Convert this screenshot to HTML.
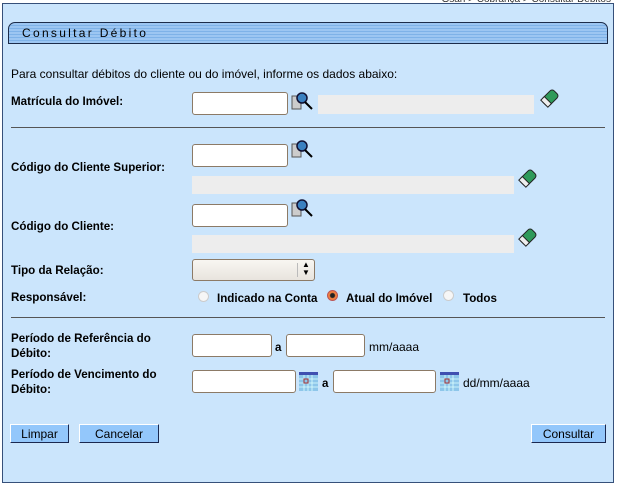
<!DOCTYPE html>
<html><head><meta charset="utf-8"><style>
body{margin:0;width:617px;height:486px;background:#fff;font-family:"Liberation Sans",sans-serif;font-size:12px;color:#000;position:relative;overflow:hidden}
.a{position:absolute}
#panel{left:2px;top:3px;width:610px;height:478px;border:1px solid #36507a;background:#cbe5fc}
#hdr{left:8px;top:22px;width:598px;height:20px;border:1px solid #1c2c4a;border-radius:7px 7px 0 0;background:repeating-linear-gradient(#9cc6f2 0 2px,#7eb2e8 2px 3px)}
#hdr span{position:absolute;left:13px;top:3px;letter-spacing:2.3px;font-size:12px}
.in{position:absolute;background:#fff;border:1px solid #8c7a66;border-radius:3px;box-sizing:border-box}
.gr{position:absolute;background:#ededed}
.b{font-weight:bold;font-size:11.6px}
hr{position:absolute;margin:0;border:0;border-top:1px solid #555;height:0}
.btn{position:absolute;background:#93c7fb;border:1px solid;border-color:#fff #1a2850 #1a2850 #fff;font-size:12px;text-align:center;line-height:18px;height:19px;box-sizing:border-box}
.rad{position:absolute;width:11px;height:11px;border-radius:50%;border:1px solid #ccc;background:#f6f6f6;box-sizing:border-box}
</style></head><body>
<div class="a" style="right:6px;top:-6px;font-size:10px;color:#333">Gsan &gt; Cobrança &gt; Consultar Débitos</div>
<div class="a" id="panel"></div>
<div class="a" id="hdr"><span>Consultar Débito</span></div>
<div class="a" style="left:11px;top:67px">Para consultar débitos do cliente ou do imóvel, informe os dados abaixo:</div>
<div class="a b" style="left:11px;top:95px">Matrícula do Imóvel:</div>
<div class="in" style="left:192px;top:92px;width:96px;height:23px"></div>
<svg class="a" style="left:291px;top:91px" width="24" height="22"><rect x="1" y="5" width="9" height="13" fill="#ccc" stroke="#555"/><circle cx="11" cy="7" r="5" fill="#3a80c0" stroke="#113" stroke-width="1.5"/><line x1="14" y1="11" x2="21" y2="18" stroke="#000" stroke-width="2"/></svg>
<div class="gr" style="left:318px;top:95px;width:216px;height:19px"></div>
<svg class="a" style="left:540px;top:88px" width="20" height="20"><g transform="rotate(45 10 10)"><rect x="5" y="2" width="10" height="16" rx="3" fill="#2f9a5a" stroke="#222"/><rect x="5" y="13" width="10" height="5" fill="#eee" stroke="#222"/></g></svg>
<hr style="left:11px;top:127px;width:594px">
<div class="a b" style="left:11px;top:161px">Código do Cliente Superior:</div>
<div class="in" style="left:192px;top:144px;width:96px;height:23px"></div>
<svg class="a" style="left:291px;top:139px" width="24" height="22"><rect x="1" y="5" width="9" height="13" fill="#ccc" stroke="#555"/><circle cx="11" cy="7" r="5" fill="#3a80c0" stroke="#113" stroke-width="1.5"/><line x1="14" y1="11" x2="21" y2="18" stroke="#000" stroke-width="2"/></svg>
<div class="gr" style="left:192px;top:176px;width:322px;height:18px"></div>
<svg class="a" style="left:518px;top:168px" width="20" height="20"><g transform="rotate(45 10 10)"><rect x="5" y="2" width="10" height="16" rx="3" fill="#2f9a5a" stroke="#222"/><rect x="5" y="13" width="10" height="5" fill="#eee" stroke="#222"/></g></svg>
<div class="a b" style="left:11px;top:220px">Código do Cliente:</div>
<div class="in" style="left:192px;top:204px;width:96px;height:23px"></div>
<svg class="a" style="left:291px;top:198px" width="24" height="22"><rect x="1" y="5" width="9" height="13" fill="#ccc" stroke="#555"/><circle cx="11" cy="7" r="5" fill="#3a80c0" stroke="#113" stroke-width="1.5"/><line x1="14" y1="11" x2="21" y2="18" stroke="#000" stroke-width="2"/></svg>
<div class="gr" style="left:192px;top:235px;width:322px;height:18px"></div>
<svg class="a" style="left:518px;top:227px" width="20" height="20"><g transform="rotate(45 10 10)"><rect x="5" y="2" width="10" height="16" rx="3" fill="#2f9a5a" stroke="#222"/><rect x="5" y="13" width="10" height="5" fill="#eee" stroke="#222"/></g></svg>
<div class="a b" style="left:11px;top:264px">Tipo da Relação:</div>
<div class="in" style="left:192px;top:259px;width:123px;height:22px;background:linear-gradient(#f8f6f2,#e8e4de)"><div class="a" style="left:104px;top:3px;height:14px;border-left:1px solid #bbb"></div><div class="a" style="left:109px;top:1px;font-size:8px;line-height:8px">▲<br>▼</div></div>
<div class="a b" style="left:11px;top:291px">Responsável:</div>
<div class="rad" style="left:198px;top:291px"></div>
<div class="a b" style="left:217px;top:292px">Indicado na Conta</div>
<div class="rad" style="left:327px;top:290px;border-color:#b55;background:radial-gradient(circle,#222 0 2px,#f08040 3px)"></div>
<div class="a b" style="left:346px;top:292px">Atual do Imóvel</div>
<div class="rad" style="left:443px;top:290px"></div>
<div class="a b" style="left:463px;top:292px">Todos</div>
<hr style="left:11px;top:317px;width:594px">
<div class="a b" style="left:11px;top:331px;line-height:15px">Período de Referência do<br>Débito:</div>
<div class="in" style="left:192px;top:334px;width:80px;height:23px"></div>
<div class="a b" style="left:275px;top:341px">a</div>
<div class="in" style="left:286px;top:334px;width:79px;height:23px"></div>
<div class="a" style="left:369px;top:340px">mm/aaaa</div>
<div class="a b" style="left:11px;top:367px;line-height:15px">Período de Vencimento do<br>Débito:</div>
<div class="in" style="left:192px;top:370px;width:104px;height:23px"></div>
<svg class="a" style="left:299px;top:372px" width="20" height="20"><rect x="0" y="0" width="19" height="19" fill="#8ec6ea"/><rect x="0" y="0" width="19" height="3" fill="#4050b0"/><path d="M0 7H19M0 11H19M0 15H19M5 3V19M9 3V19M13 3V19" stroke="#dff" stroke-width=".8"/><rect x="5" y="7" width="4" height="4" fill="none" stroke="#a33"/></svg>
<div class="a b" style="left:322px;top:377px">a</div>
<div class="in" style="left:333px;top:370px;width:103px;height:23px"></div>
<svg class="a" style="left:440px;top:372px" width="20" height="20"><rect x="0" y="0" width="19" height="19" fill="#8ec6ea"/><rect x="0" y="0" width="19" height="3" fill="#4050b0"/><path d="M0 7H19M0 11H19M0 15H19M5 3V19M9 3V19M13 3V19" stroke="#dff" stroke-width=".8"/><rect x="5" y="7" width="4" height="4" fill="none" stroke="#a33"/></svg>
<div class="a" style="left:463px;top:376px">dd/mm/aaaa</div>
<div class="btn" style="left:10px;top:424px;width:59px">Limpar</div>
<div class="btn" style="left:79px;top:424px;width:80px">Cancelar</div>
<div class="btn" style="left:531px;top:424px;width:75px">Consultar</div>
</body></html>
